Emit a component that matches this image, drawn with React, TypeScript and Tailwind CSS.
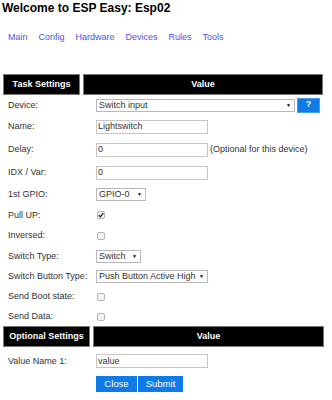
import type { ReactNode } from "react";

const NAV = ["Main", "Config", "Hardware", "Devices", "Rules", "Tools"];

function Row({
  label,
  h,
  labelW = "w-[96px]",
  children,
}: {
  label: string;
  h: string;
  labelW?: string;
  children?: ReactNode;
}) {
  return (
    <div className={`flex items-center ${h}`}>
      <div className={`${labelW} pl-[8px] text-[9px] leading-[11px] text-[#333]`}>
        {label}
      </div>
      <div className="flex items-center">{children}</div>
    </div>
  );
}

function Select({ w, value }: { w: string; value: string }) {
  return (
    <div
      className={`${w} h-[13px] flex items-center justify-between border border-[#b8b8b8] bg-white pl-[2px] pr-[3px] text-[9px] leading-[11px] text-[#333]`}
    >
      <span>{value}</span>
      <span className="text-[5px] text-black">▼</span>
    </div>
  );
}

function Input({ value }: { value: string }) {
  return (
    <div className="w-[112px] h-[14px] flex items-center border border-[#c6c6c6] bg-white pl-[1px] text-[9px] leading-[11px] text-[#333]">
      {value}
    </div>
  );
}

function Check({ checked = false }: { checked?: boolean }) {
  return (
    <div className="ml-[1px] w-[8px] h-[8px] rounded-[2px] border border-[#b5b5b5] bg-[#f3f3f3] flex items-center justify-center">
      {checked && (
        <svg width="6" height="6" viewBox="0 0 6 6">
          <path d="M0.8 3.2 L2.4 4.8 L5.2 1.2" stroke="#222" strokeWidth="1.3" fill="none" />
        </svg>
      )}
    </div>
  );
}

function Header({ left, leftW, rightW }: { left: string; leftW: string; rightW: string }) {
  return (
    <div className="flex h-[21px] pl-[3px] gap-[3px] text-[9px] font-bold text-white">
      <div className={`${leftW} bg-black border border-[#7a7a7a] flex items-center justify-center`}>
        {left}
      </div>
      <div className={`${rightW} bg-black border border-[#7a7a7a] flex items-center justify-center`}>
        Value
      </div>
    </div>
  );
}

export default function App() {
  return (
    <div
      className="w-[332px] h-[400px] overflow-hidden bg-white"
      style={{ fontFamily: '"Liberation Sans", Arial, sans-serif' }}
    >
      <h1 className="pl-[2px] pt-[1px] text-[12px] leading-[14px] font-bold text-black">
        Welcome to ESP Easy: Esp02
      </h1>

      <nav className="mt-[16px] flex gap-[11px] pl-[8px] text-[9px] leading-[12px] text-[#5050f0]">
        {NAV.map((item) => (
          <a key={item}>{item}</a>
        ))}
      </nav>

      <div className="mt-[31px]">
        <Header left="Task Settings" leftW="w-[77px]" rightW="w-[240px]" />

        <Row label="Device:" h="h-[20px]">
          <Select w="w-[199px]" value="Switch input" />
          <div className="ml-[2px] w-[23px] h-[15px] bg-[#0f7be6] border border-[#4a9bef] flex items-center justify-center text-[9px] font-bold text-white">
            ?
          </div>
        </Row>
        <Row label="Name:" h="h-[23px]">
          <Input value="Lightswitch" />
        </Row>
        <Row label="Delay:" h="h-[23px]">
          <Input value="0" />
          <span className="ml-[2px] text-[9px] leading-[11px] text-[#333]">
            (Optional for this device)
          </span>
        </Row>
        <Row label="IDX / Var:" h="h-[23px]">
          <Input value="0" />
        </Row>
        <Row label="1st GPIO:" h="h-[21px]">
          <Select w="w-[50px]" value="GPIO-0" />
        </Row>
        <Row label="Pull UP:" h="h-[20px]">
          <Check checked />
        </Row>
        <Row label="Inversed:" h="h-[21px]">
          <Check />
        </Row>
        <Row label="Switch Type:" h="h-[20px]">
          <Select w="w-[45px]" value="Switch" />
        </Row>
        <Row label="Switch Button Type:" h="h-[20px]">
          <Select w="w-[112px]" value="Push Button Active High" />
        </Row>
        <Row label="Send Boot state:" h="h-[21px]">
          <Check />
        </Row>
        <Row label="Send Data:" h="h-[19px]">
          <Check />
        </Row>
      </div>

      <div>
        <Header left="Optional Settings" leftW="w-[87px]" rightW="w-[231px]" />
        <Row label="Value Name 1:" h="h-[28px]">
          <Input value="value" />
        </Row>
        <div className="flex pl-[96px] mt-[1px] text-[9.5px] text-white">
          <div className="w-[41px] h-[16px] bg-[#0f7be6] flex items-center justify-center">
            Close
          </div>
          <div className="ml-[1px] w-[45px] h-[16px] bg-[#0f7be6] flex items-center justify-center">
            Submit
          </div>
        </div>
      </div>
    </div>
  );
}
